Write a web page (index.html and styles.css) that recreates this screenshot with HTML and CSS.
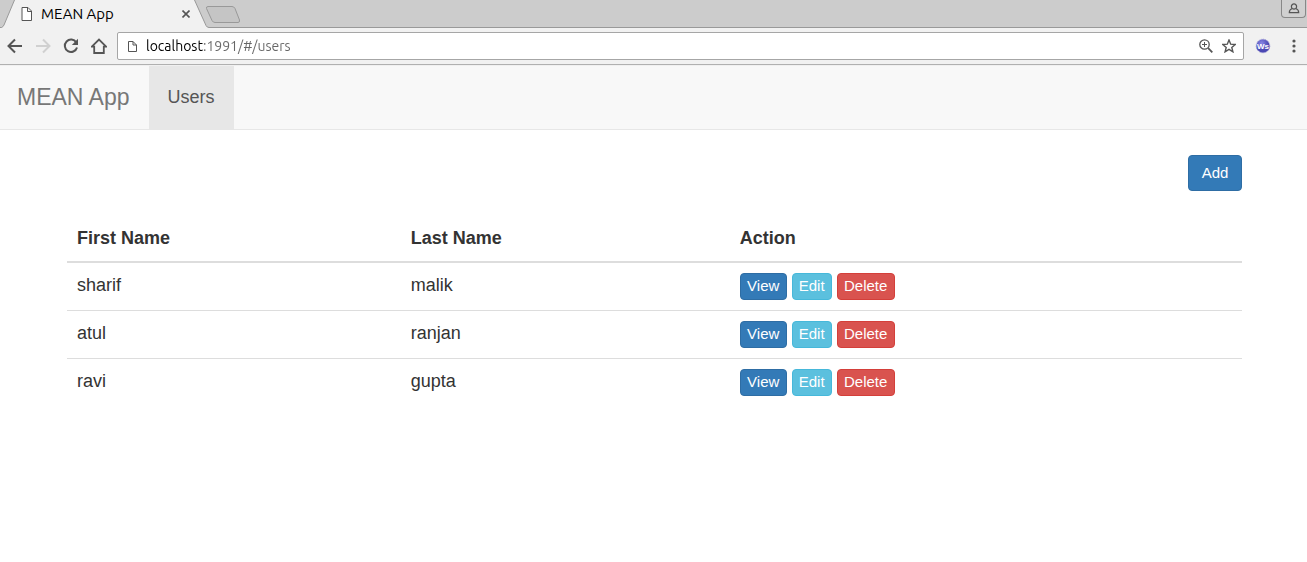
FILE: index.html
```html
<!DOCTYPE html>
<html lang="en">
<head>
<meta charset="utf-8">
<title>MEAN App</title>
<link rel="stylesheet" href="styles.css">
</head>
<body>
<header class="browser">
  <div class="tabstrip">
    <div class="tab">
      <svg class="tab-shape" width="242" height="28" viewBox="0 0 242 28" aria-hidden="true">
        <path d="M0 28V27.5H1.500Q3 27 4 25L14.500 0H194.500L206 25.500Q207 27.500 209 27.500V28Z" fill="#f1f1f1"/>
        <path d="M0 27.500H1.500Q3 27 4 25L14.500 0M194.500 0L206 25.500Q207 27.500 209 27.500H242" fill="none" stroke="#999"/>
        <path d="M208 6.500H232Q234 6.500 235 8.500L239.500 20Q240 22.500 238 22.500H215Q213 22.500 212 20.500L206.500 8.500Q206 6.500 208 6.500Z" fill="#c5c5c5" stroke="#999"/>
      </svg>
      <svg class="page-icon" width="12" height="14" viewBox="0 0 12 14" aria-hidden="true"><path d="M1 .5H7L10.500 4V13.500H1ZM6.500 .5V4.500H10.500" fill="#fff" stroke="#555"/></svg>
      <span class="tab-title">MEAN App</span>
      <button class="icon-button tab-close" aria-label="Close tab"><svg width="8" height="8" viewBox="0 0 8 8"><path d="M.5 .5L7.500 7.500M7.500 .5L.5 7.500" stroke="#555" stroke-width="1.600"/></svg></button>
    </div>
    <button class="profile" aria-label="Profile"><svg width="12" height="11" viewBox="0 0 12 11"><path d="M4.300 5.500A2.600 2.600 0 1 1 7.700 5.500M4.300 5.500Q1.300 6.500 1.300 9.600H10.700Q10.700 6.500 7.700 5.500Q6 6.600 4.300 5.500Z" fill="none" stroke="#555" stroke-width="1.200"/></svg></button>
  </div>
  <div class="toolbar">
    <div class="nav-buttons">
      <button class="icon-button" aria-label="Back"><svg width="16" height="16" viewBox="0 0 16 16"><path d="M15 8H2M8 1.500L1.500 8L8 14.500" fill="none" stroke="#555" stroke-width="2"/></svg></button>
      <button class="icon-button" aria-label="Forward" disabled><svg width="16" height="16" viewBox="0 0 16 16"><path d="M1 8H14M8 1.500L14.500 8L8 14.500" fill="none" stroke="#d0d0d0" stroke-width="2"/></svg></button>
      <button class="icon-button" aria-label="Reload"><svg width="16" height="16" viewBox="0 0 16 16"><path d="M13.300 4.500A6.200 6.200 0 1 0 14 9.500" fill="none" stroke="#555" stroke-width="2"/><path d="M15 .8V7H8.800Z" fill="#555"/></svg></button>
      <button class="icon-button" aria-label="Home"><svg width="16" height="16" viewBox="0 0 16 16"><path d="M.8 8.700L8 1.500L15.200 8.700H12.800V15H3.200V8.700Z" fill="none" stroke="#555" stroke-width="1.800"/></svg></button>
    </div>
    <div class="omnibox">
      <svg width="9" height="11" viewBox="0 0 9 11" aria-hidden="true"><path d="M.5 .5H5L8.500 4V10.500H.5ZM5 .5V4H8.500" fill="none" stroke="#555"/></svg>
      <input class="address" type="text" aria-label="Address" value="localhost:1991/#/users" spellcheck="false">
      <button class="icon-button" aria-label="Zoom"><svg width="14" height="14" viewBox="0 0 14 14"><path d="M9.200 9.200L13.300 13.300" stroke="#555" stroke-width="1.800"/><circle cx="5.500" cy="5.500" r="4.700" fill="none" stroke="#555" stroke-width="1.300"/><path d="M3 5.500H8M5.500 3V8" stroke="#555"/></svg></button>
      <button class="icon-button" aria-label="Bookmark"><svg width="14" height="14" viewBox="0 0 14 14"><path d="M7 1L8.700 5.200L13.200 5.500L9.800 8.400L10.900 12.800L7 10.400L3.100 12.800L4.200 8.400L.8 5.500L5.300 5.200Z" fill="none" stroke="#555" stroke-width="1.400"/></svg></button>
    </div>
    <button class="icon-button extension" aria-label="Extension"><svg width="16" height="16" viewBox="0 0 16 16"><defs><radialGradient id="orb" cx="40%" cy="30%"><stop offset="0" stop-color="#8886e4"/><stop offset="1" stop-color="#4b48b4"/></radialGradient></defs><circle cx="8" cy="8" r="6.800" fill="url(#orb)" stroke="#9e9bd5" stroke-dasharray="1 1"/><text x="8" y="11" class="orb-text">Ws</text></svg></button>
    <button class="icon-button" aria-label="Menu"><svg width="4" height="14" viewBox="0 0 4 14" fill="#555"><circle cx="2" cy="2" r="1.600"/><circle cx="2" cy="7" r="1.600"/><circle cx="2" cy="12" r="1.600"/></svg></button>
  </div>
</header>
<nav class="navbar">
  <a class="brand" href="#/">MEAN App</a>
  <a class="nav-link" href="#/users" aria-current="page">Users</a>
</nav>
<main class="content">
  <div class="actions"><button class="btn btn-primary btn-large">Add</button></div>
  <table class="users">
    <thead><tr><th class="col-first">First Name</th><th class="col-last">Last Name</th><th>Action</th></tr></thead>
    <tbody>
      <tr><td>sharif</td><td>malik</td><td><div class="row-actions"><button class="btn btn-primary">View</button><button class="btn btn-info">Edit</button><button class="btn btn-danger">Delete</button></div></td></tr>
      <tr><td>atul</td><td>ranjan</td><td><div class="row-actions"><button class="btn btn-primary">View</button><button class="btn btn-info">Edit</button><button class="btn btn-danger">Delete</button></div></td></tr>
      <tr><td>ravi</td><td>gupta</td><td><div class="row-actions"><button class="btn btn-primary">View</button><button class="btn btn-info">Edit</button><button class="btn btn-danger">Delete</button></div></td></tr>
    </tbody>
  </table>
</main>
</body>
</html>
```
FILE: styles.css
```css
* { box-sizing: border-box; }
body {
  margin: 0;
  background: #fff;
  color: #333;
  font-family: "Liberation Sans", Arial, sans-serif;
  font-size: 18px;
  line-height: 26px;
}
svg { display: block; flex: none; }
button { font-family: inherit; }
.browser { font-family: Ubuntu, "Noto Sans", sans-serif; }
.tabstrip {
  display: flex;
  justify-content: space-between;
  align-items: flex-start;
  height: 28px;
  background: #ccc;
  border-bottom: 1px solid #999;
}
.tab {
  position: relative;
  display: flex;
  align-items: center;
  width: 242px;
  height: 28px;
  padding-left: 21px;
}
.tab-shape { position: absolute; left: 0; top: 0; }
.page-icon, .tab-title, .tab-close { position: relative; }
.tab-title {
  width: 141px;
  margin-left: 8px;
  color: #000;
  font-size: 15px;
  line-height: 20px;
}
.icon-button {
  display: block;
  padding: 0;
  border: 0;
  background: none;
}
.profile {
  display: flex;
  align-items: center;
  justify-content: center;
  width: 25px;
  height: 18px;
  margin-right: 1px;
  padding: 0;
  border: 1px solid #888;
  border-top: 0;
  border-radius: 0 0 4px 4px;
  background: #d0d0d0;
}
.toolbar {
  display: flex;
  align-items: center;
  height: 37px;
  padding: 0 11px 0 7px;
  background: #f1f1f1;
  border-bottom: 1px solid #b0b0b0;
}
.nav-buttons { display: flex; gap: 12px; margin-right: 10px; }
.omnibox {
  display: flex;
  flex: 1;
  align-items: center;
  gap: 9px;
  height: 28px;
  padding: 0 7px 0 10px;
  background: #fff;
  border: 1px solid #a6a6a6;
  border-radius: 2px;
}
.address {
  flex: 1;
  min-width: 0;
  padding: 0;
  border: 0;
  outline: 0;
  background: linear-gradient(90deg, #000 58px, #666 58px);
  -webkit-background-clip: text;
  background-clip: text;
  color: transparent;
  font-family: inherit;
  font-size: 14px;
  line-height: 20px;
}
.extension { margin: 0 21px 0 11px; }
.orb-text {
  fill: #fff;
  font-family: "Liberation Sans", Arial, sans-serif;
  font-size: 8px;
  font-weight: bold;
  text-anchor: middle;
}
.navbar {
  display: flex;
  height: 65px;
  border-top: 1px solid #f0f0f0;
  border-bottom: 1px solid #e7e7e7;
  background: #f8f8f8;
  line-height: 62px;
}
.navbar a { text-decoration: none; }
.brand { padding: 0 19px 0 17px; color: #777; font-size: 23px; }
.nav-link { padding: 0 19px; color: #555; background: #e7e7e7; }
.content { padding: 25px 65px 0 67px; }
.actions { display: flex; justify-content: flex-end; margin-bottom: 24px; }
.btn {
  display: block;
  padding: 1px 6px 2px;
  border: 1px solid;
  border-radius: 4px;
  color: #fff;
  font-size: 15px;
  line-height: 22px;
}
.row-actions .btn { min-width: 40px; }
.row-actions .btn-primary { min-width: 47px; }
.row-actions .btn-danger { min-width: 58px; }
.btn-large { padding: 6px 12px; min-width: 54px; }
.btn-primary { background: #337ab7; border-color: #2e6da4; }
.btn-info { background: #5bc0de; border-color: #46b8da; }
.btn-danger { background: #d9534f; border-color: #d43f3a; }
.users { width: 100%; border-collapse: separate; border-spacing: 0; table-layout: fixed; }
.users th, .users td { padding: 10px; text-align: left; vertical-align: top; }
.users th { border-bottom: 2px solid #ddd; }
.users td { line-height: 24px; }
.users tr + tr td { border-top: 1px solid #ddd; }
.col-first { width: 28.4%; }
.col-last { width: 28%; }
.row-actions { display: flex; gap: 5px; }
```
